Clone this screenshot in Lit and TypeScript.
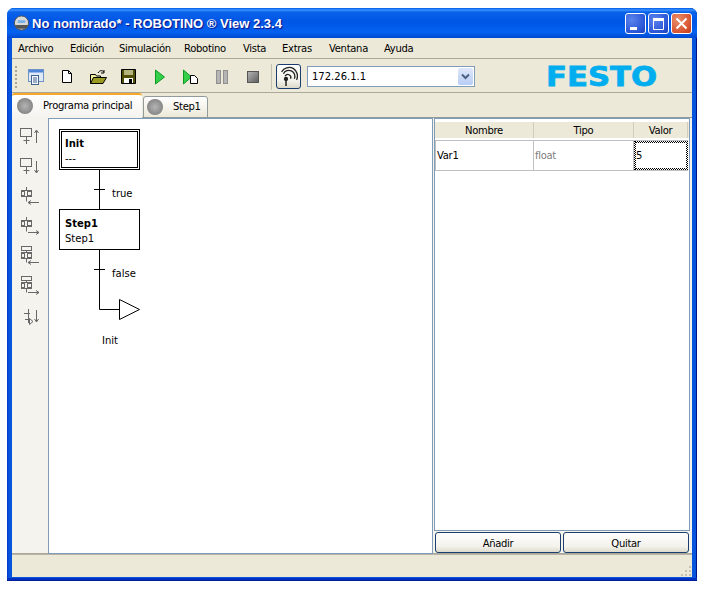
import { LitElement, css, html, svg } from "lit";
import { customElement } from "lit/decorators.js";

const menus = ["Archivo", "Edición", "Simulación", "Robotino", "Vista", "Extras", "Ventana", "Ayuda"];

const box = svg`<rect x="2.5" y="1.5" width="11" height="8" /><path d="M8.500 9.500v7.500M5.500 13.500h6" />`;
const arrowUp = svg`<path d="M18.500 16V4M16.500 6l2-3 2 3" />`;
const arrowDown = svg`<path d="M18.500 4v11M16.500 13l2 3 2-3" />`;
const branch = svg`<path d="M8.500 1v3M3 4.500h11M3.500 4.500v1M13.500 4.500v1M8.500 10.500v5" /><rect x="3.500" y="5.500" width="3" height="4" /><rect x="9.500" y="5.500" width="4" height="4" /><path d="M3 10.500h11" />`;
const stacked = svg`<rect x="3.500" y="0.500" width="10" height="4" /><path d="M3 6.500h11M8.500 4.500v2M8.500 12.500v4M3 12.500h11" /><rect x="3.500" y="7.500" width="3" height="4" /><rect x="9.500" y="7.500" width="4" height="4" />`;
const toLeft = svg`<path d="M21 16.500H10M13 14.500l-3 2 3 2" />`;
const toRight = svg`<path d="M10 16.500h11M18 14.500l3 2-3 2" />`;

const toolIcons = [
  svg`${box}${arrowUp}`,
  svg`${box}${arrowDown}`,
  svg`${branch}${toLeft}`,
  svg`${branch}${toRight}`,
  svg`${stacked}${toLeft}`,
  svg`${stacked}${toRight}`,
  svg`<path d="M10.500 3v14M6 7.500h6M7 13.500h3" /><path d="M11.500 12.500l3.500 3-3.500 3z" /><path d="M18.500 4v12M16.500 13l2 3 2-3" />`,
];

@customElement("app-tool-icons")
export class ToolIcons extends LitElement {
  static styles = css`
    :host {
      display: flex;
      flex-direction: column;
      flex: none;
      width: 36px;
      padding-top: 4px;
      box-sizing: border-box;
      background: #f4f3ee;
      border-bottom: 1px solid #aca899;
    }
    .cell {
      height: 30px;
      display: flex;
      align-items: center;
      padding-left: 6px;
    }
    .cell:nth-child(2) {
      height: 29px;
    }
    svg {
      fill: none;
      stroke: #686868;
      stroke-width: 1;
    }
  `;

  render() {
    return toolIcons.map(
      (icon) => html`<div class="cell"><svg width="22" height="20" viewBox="0 0 22 20">${icon}</svg></div>`
    );
  }
}

@customElement("app-diagram")
export class Diagram extends LitElement {
  static styles = css`
    :host {
      display: block;
      flex: 1;
      background: #fff;
    }
    svg {
      display: block;
    }
    .line {
      fill: none;
      stroke: #000;
      stroke-width: 1;
    }
    text {
      font-family: "DejaVu Sans", sans-serif;
      font-size: 10px;
      letter-spacing: 0;
      fill: #000;
    }
    .bold {
      font-weight: bold;
    }
  `;

  // viewBox starts at the canvas corner, so coordinates are the page's own
  render() {
    return html`<svg width="383" height="434" viewBox="49 119 383 434">
      <rect class="line" x="59.500" y="129.500" width="80" height="40" />
      <rect class="line" x="61.500" y="131.500" width="76" height="36" />
      <path class="line" d="M99.500 170v39M94 189.500h11" />
      <rect class="line" x="59.500" y="209.500" width="80" height="40" />
      <path class="line" d="M99.500 250v59.500H119M94 269.500h11" />
      <path class="line" d="M119.500 299.500v20l20-10z" />
      <text class="bold" x="65" y="147">Init</text>
      <text x="65" y="162">---</text>
      <text x="112" y="197">true</text>
      <text class="bold" x="65" y="227">Step1</text>
      <text x="65" y="242">Step1</text>
      <text x="112" y="277">false</text>
      <text x="102" y="344">Init</text>
    </svg>`;
  }
}

@customElement("app-root")
export class AppRoot extends LitElement {
  static styles = css`
    :host {
      display: block;
      width: 708px;
      height: 599px;
      background: #fff;
      padding: 8px 11px 18px 7px;
      box-sizing: border-box;
      font-family: "DejaVu Sans", sans-serif;
      font-size: 10px;
      letter-spacing: -0.3px;
      color: #000;
    }
    .window {
      height: 573px;
      box-sizing: border-box;
      display: flex;
      flex-direction: column;
      background: linear-gradient(90deg, #0032c8 0, #0855dd 2px);
      border-radius: 7px 7px 0 0;
      box-shadow: inset 0 -1px 0 #001ea0, inset 0 -3px 0 #0030c0, inset -1px 0 0 #00138c;
      padding: 0 5px 4px 5px;
    }
    .title {
      height: 30px;
      flex: none;
      margin: 0 -5px;
      padding: 0 5px 0 6px;
      display: flex;
      align-items: center;
      gap: 2px;
      color: #fff;
      background: linear-gradient(#0058e6 0, #3a93ff 2px, #0a62ea 4px, #0055e5 14px, #0462f0 24px, #0048d0 30px);
      border-radius: 7px 7px 0 0;
    }
    .title .name {
      flex: 1;
      font-family: "Liberation Sans", sans-serif;
      font-weight: bold;
      font-size: 13px;
      letter-spacing: 0;
      text-shadow: 1px 1px 1px #0f1089;
      white-space: nowrap;
    }
    .wbtn {
      width: 21px;
      height: 21px;
      box-sizing: border-box;
      border: 1px solid #fff;
      border-radius: 3px;
      background: radial-gradient(circle at 30% 30%, #5b84ec, #2a55d6 70%, #2040b8);
    }
    .wbtn.close {
      background: radial-gradient(circle at 30% 30%, #e98d6c, #d8532f 70%, #b83a1c);
    }
    .wbtn svg {
      display: block;
    }
    .menu {
      height: 21px;
      flex: none;
      box-sizing: border-box;
      display: grid;
      grid-template-columns: 52px 49px 65px 59px 39px 47px 55px auto;
      align-items: center;
      padding-left: 6px;
      background: #ece9d8;
      border-bottom: 1px solid #aca899;
    }
    .toolbar {
      height: 34px;
      flex: none;
      box-sizing: border-box;
      padding-top: 2px;
      display: flex;
      align-items: center;
      background: #ece9d8;
      border-bottom: 1px solid #aca899;
    }
    .grip {
      width: 2px;
      height: 22px;
      margin: 0 3px 0 3px;
      background: repeating-linear-gradient(#a8a490 0 2px, transparent 2px 4px);
    }
    .tbtn {
      width: 31px;
      height: 24px;
      display: flex;
      align-items: center;
      justify-content: center;
    }
    .sep {
      width: 1px;
      height: 26px;
      background: #c5c2b2;
      margin: 0 4px 0 3px;
    }
    .wifi {
      width: 25px;
      height: 25px;
      box-sizing: border-box;
      border: 1px solid #1b3c6e;
      border-radius: 3px;
      background: linear-gradient(#fff, #f2f1ea 70%, #dcd8c8);
      display: flex;
      align-items: center;
      justify-content: center;
    }
    .combo {
      width: 168px;
      height: 21px;
      margin-left: 6px;
      box-sizing: border-box;
      border: 1px solid #7f9db9;
      background: #fff;
      display: flex;
      align-items: center;
      justify-content: space-between;
      padding: 1px 1px 1px 4px;
      letter-spacing: 0;
    }
    .drop {
      width: 15px;
      height: 17px;
      border-radius: 2px;
      background: linear-gradient(#dfe8fb, #b8ccf4);
      display: flex;
      align-items: center;
      justify-content: center;
    }
    .logo {
      margin: -3px 0 -3px 72px;
      display: block;
      overflow: visible;
    }
    .logo text {
      font-family: "DejaVu Sans", sans-serif;
      font-weight: bold;
      font-size: 27px;
      letter-spacing: 0;
      fill: #00aeef;
      stroke: #00aeef;
      stroke-width: 0.8;
    }
    .tabs {
      height: 25px;
      flex: none;
      display: flex;
      align-items: flex-end;
      background: #ece9d8;
      box-shadow: inset 0 -1px 0 #919b9c;
    }
    .tab {
      display: flex;
      align-items: center;
      box-sizing: border-box;
      white-space: nowrap;
    }
    .tab.active {
      width: 130px;
      height: 25px;
      padding: 0 0 2px 5px;
      gap: 10px;
      background: linear-gradient(#fff, #f4f3ee);
      border-top: 2px solid #f6a828;
      border-radius: 3px 3px 0 0;
    }
    .tab.other {
      width: 65px;
      height: 22px;
      margin-left: 1px;
      padding: 0 0 1px 3px;
      gap: 10px;
      background: linear-gradient(#fff, #ece9d8);
      border: 1px solid #919b9c;
      border-radius: 3px 3px 0 0;
    }
    .ball {
      width: 16px;
      height: 16px;
      flex: none;
      border-radius: 50%;
      background: radial-gradient(circle at 50% 50%, #b4b4b4, #8e8e8e 60%, #5e5e5e);
    }
    .main {
      flex: 1;
      display: flex;
      min-height: 0;
      background: #f4f3ee;
    }
    .canvas {
      width: 385px;
      flex: none;
      box-sizing: border-box;
      display: flex;
      border: 1px solid #7f9db9;
    }
    .side {
      flex: 1;
      display: flex;
      flex-direction: column;
      padding: 0 2px 0 1px;
      border-bottom: 1px solid #aca899;
    }
    .vars {
      flex: 1;
      border: 1px solid #7f9db9;
      background: #fff;
      padding-top: 3px;
    }
    .row {
      display: grid;
      grid-template-columns: 99px 100px 54px;
    }
    .head {
      height: 16px;
      background: #ece9d8;
      margin-bottom: 2px;
    }
    .head div {
      text-align: center;
      line-height: 18px;
      height: 16px;
      border-right: 1px solid #d0cdbd;
    }
    .body {
      height: 31px;
      box-sizing: border-box;
      border-top: 1px solid #c0c0c0;
      border-bottom: 1px solid #c0c0c0;
      border-left: 1px solid #c0c0c0;
      line-height: 29px;
      width: 253px;
      grid-template-columns: 98px 100px 54px;
    }
    .body div {
      padding-left: 1px;
      border-right: 1px solid #c0c0c0;
      overflow: hidden;
    }
    .body .type {
      color: #808080;
    }
    .body .focus {
      height: 29px;
      line-height: 27px;
      box-sizing: border-box;
      border: 1px dotted #000;
      outline: 1px dotted #000;
      outline-offset: -2px;
    }
    .btns {
      display: flex;
      gap: 2px;
      padding: 1px 1px 0 1px;
    }
    .btn {
      flex: 1;
      height: 21px;
      box-sizing: border-box;
      border: 1px solid #1c3f70;
      border-radius: 3px;
      background: linear-gradient(#fff, #f3f2ec 70%, #dedbcc);
      text-align: center;
      line-height: 21px;
    }
    .status {
      height: 23px;
      flex: none;
      box-sizing: border-box;
      border-top: 1px solid #b8b5a6;
      background: #ece9d8;
      display: flex;
      justify-content: flex-end;
      align-items: flex-end;
    }
  `;

  render() {
    return html`<div class="window">
      <div class="title">
        <svg width="17" height="18" viewBox="0 0 18 18">
          <circle cx="9" cy="9" r="7.500" fill="#d9d9d9" stroke="#505050" />
          <path d="M2 11h14l-2 4H4z" fill="#555" />
          <path d="M5 6h8v3H5z" fill="#7ab2e8" />
        </svg>
        <span class="name">No nombrado* - ROBOTINO ® View 2.3.4</span>
        <div class="wbtn">
          <svg width="19" height="19" viewBox="0 0 19 19"><path d="M4 13h7v3H4z" fill="#fff" /></svg>
        </div>
        <div class="wbtn">
          <svg width="19" height="19" viewBox="0 0 19 19"><path d="M4.500 6.500h10v9h-10z" fill="none" stroke="#fff" /><path d="M4 4h11v3H4z" fill="#fff" /></svg>
        </div>
        <div class="wbtn close">
          <svg width="19" height="19" viewBox="0 0 19 19"><path d="M4.500 4.500l10 10M14.500 4.500l-10 10" stroke="#fff" stroke-width="2" /></svg>
        </div>
      </div>

      <div class="menu">${menus.map((m) => html`<span>${m}</span>`)}</div>

      <div class="toolbar">
        <div class="grip"></div>
        <div class="tbtn">
          <svg width="18" height="16" viewBox="0 0 18 16">
            <rect x="1.500" y="0.500" width="15" height="12" fill="#dfe9f7" stroke="#6f93c9" />
            <rect x="2" y="1" width="14" height="2.500" fill="#4f86d9" />
            <rect x="4.500" y="6.500" width="7" height="9" fill="#f4f7fc" stroke="#43648f" />
            <path d="M6 9h4M6 11h4M6 13h4" stroke="#43648f" />
          </svg>
        </div>
        <div class="tbtn">
          <svg width="14" height="16" viewBox="0 0 14 16">
            <path d="M2.500 1.500h6l3 3v9h-9z" fill="#fff" stroke="#000" />
            <path d="M8.500 1.500v3h3" fill="none" stroke="#000" />
          </svg>
        </div>
        <div class="tbtn">
          <svg width="18" height="16" viewBox="0 0 18 16">
            <path d="M1.500 5.500h5l1 1.500h4v7h-10z" fill="#f5f0a0" stroke="#000" />
            <path d="M1.500 14.500l3-6h13l-3.500 6z" fill="#9a9a20" stroke="#000" />
            <path d="M9 4c2-3 4-3 6-1M15 1v3h-3" fill="none" stroke="#000" />
          </svg>
        </div>
        <div class="tbtn">
          <svg width="15" height="15" viewBox="0 0 15 15">
            <path d="M.5.500h14v14H.5z" fill="#4f4f08" stroke="#000" />
            <rect x="3" y="1" width="9" height="5" fill="#b4b47c" />
            <rect x="3" y="9" width="9" height="5" fill="#fff" />
            <rect x="8" y="10" width="3" height="4" fill="#000" />
          </svg>
        </div>
        <div class="tbtn">
          <svg width="12" height="16" viewBox="0 0 12 16">
            <path d="M1.500 1l9 7-9 7z" fill="#35d04a" stroke="#0c9a22" />
          </svg>
        </div>
        <div class="tbtn">
          <svg width="17" height="16" viewBox="0 0 17 16">
            <path d="M1.500 1l8 7-8 7z" fill="#35d04a" stroke="#0c9a22" />
            <path d="M8.500 6.500h4l3 3v5h-7z" fill="#fff" stroke="#000" />
          </svg>
        </div>
        <div class="tbtn">
          <svg width="12" height="14" viewBox="0 0 12 14">
            <rect x="0.500" y="0.500" width="4" height="13" fill="#b5b5b5" stroke="#8f8f8f" />
            <rect x="7.500" y="0.500" width="4" height="13" fill="#b5b5b5" stroke="#8f8f8f" />
          </svg>
        </div>
        <div class="tbtn">
          <svg width="12" height="12" viewBox="0 0 12 12">
            <defs>
              <linearGradient id="stop" x1="0" y1="0" x2="1" y2="1">
                <stop offset="0" stop-color="#b8b8b8" />
                <stop offset="1" stop-color="#5c5c5c" />
              </linearGradient>
            </defs>
            <rect x="0.500" y="0.500" width="11" height="11" fill="url(#stop)" stroke="#555" />
          </svg>
        </div>
        <div class="sep"></div>
        <div class="wifi">
          <svg width="19" height="21" viewBox="0 0 19 21" fill="none" stroke="#222" stroke-width="1.300">
            <path d="M6 11.500a3 3 0 0 1 3-3 3 3 0 0 1 3 3" transform="rotate(25 9 11)" />
            <path d="M3.500 10a6 6 0 0 1 6-6 6 6 0 0 1 6 6" transform="rotate(25 9 11)" />
            <path d="M1 9a9 9 0 0 1 9-8 9 9 0 0 1 8 9" transform="rotate(25 9 11)" />
            <circle cx="7" cy="13" r="1.500" fill="#222" />
            <path d="M7 13v7" stroke-width="1.500" />
          </svg>
        </div>
        <div class="combo">
          <span>172.26.1.1</span>
          <div class="drop">
            <svg width="9" height="7" viewBox="0 0 9 7"><path d="M1 1.500l3.500 3.500 3.500-3.500" fill="none" stroke="#4d6185" stroke-width="2" /></svg>
          </div>
        </div>
        <svg class="logo" width="114" height="34" viewBox="0 0 114 34">
          <text x="-1" y="26" textLength="111" lengthAdjust="spacingAndGlyphs">FESTO</text>
        </svg>
      </div>

      <div class="tabs">
        <div class="tab active"><span class="ball"></span><span>Programa principal</span></div>
        <div class="tab other"><span class="ball"></span><span>Step1</span></div>
      </div>

      <div class="main">
        <app-tool-icons></app-tool-icons>
        <div class="canvas"><app-diagram></app-diagram></div>
        <div class="side">
          <div class="vars">
            <div class="row head"><div>Nombre</div><div>Tipo</div><div>Valor</div></div>
            <div class="row body">
              <div>Var1</div>
              <div class="type">float</div>
              <div class="focus">5</div>
            </div>
          </div>
          <div class="btns"><div class="btn">Añadir</div><div class="btn">Quitar</div></div>
        </div>
      </div>

      <div class="status">
        <svg width="12" height="12" viewBox="0 0 12 12" fill="#c5c2b2">
          <rect x="9" y="1" width="2" height="2" />
          <rect x="5" y="5" width="2" height="2" /><rect x="9" y="5" width="2" height="2" />
          <rect x="1" y="9" width="2" height="2" /><rect x="5" y="9" width="2" height="2" /><rect x="9" y="9" width="2" height="2" />
        </svg>
      </div>
    </div>`;
  }
}
